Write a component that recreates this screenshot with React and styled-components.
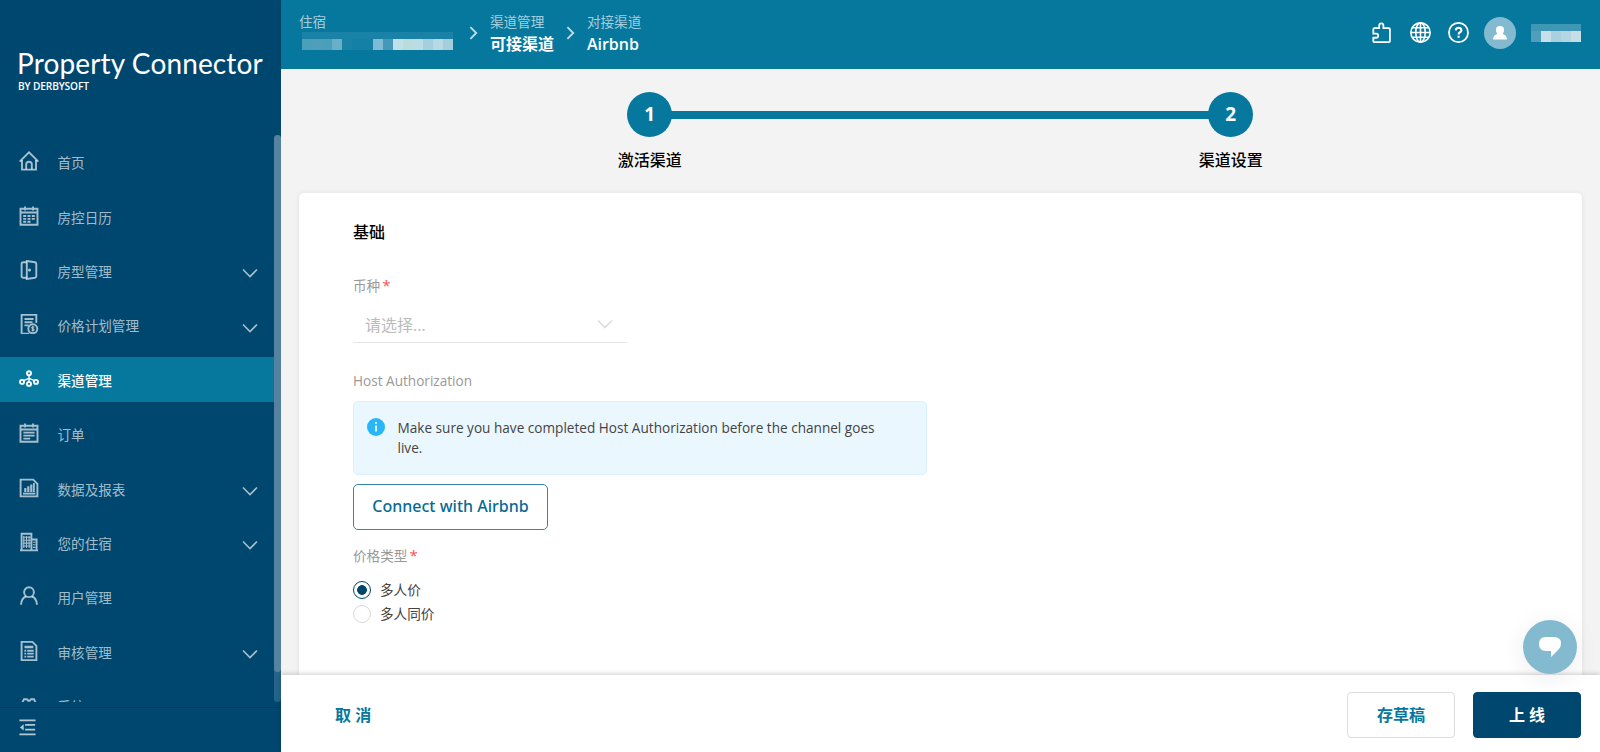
import React, { useState } from "react";
import styled, { createGlobalStyle } from "styled-components";

const menu = [
  { icon: "home", label: "首页" },
  { icon: "calendar", label: "房控日历" },
  { icon: "door", label: "房型管理", children: true },
  { icon: "ratePlan", label: "价格计划管理", children: true },
  { icon: "channel", label: "渠道管理" },
  { icon: "order", label: "订单" },
  { icon: "report", label: "数据及报表", children: true },
  { icon: "building", label: "您的住宿", children: true },
  { icon: "user", label: "用户管理" },
  { icon: "audit", label: "审核管理", children: true },
  { icon: "settings", label: "系统" },
];

const propertyMask = [
  "#4b9fbb", "#4f9fba", "#4b9fbb", "#69afc5", "#1a82a6", "#1580a5", "#1580a5",
  "#7fbbd2", "#4399b7", "#c1dfe8", "#bbdcd9", "#b9dce6", "#a4cfdf", "#b8d9e3", "#a5cedc",
];

const userMask = ["#4f9fbc", "#c6dfe8", "#a8d0de", "#b3d6e1", "#c6dfe6"];

const icons = {
  home: (
    <>
      <path d="M.6 10.7 10 1.3l9.4 9.4" />
      <path d="M3 9v9.6h14V9" />
      <path d="M7.2 18.4v-4.8a2.8 2.8 0 0 1 5.6 0v4.8" />
    </>
  ),
  calendar: (
    <>
      <path d="M1.5 2.7h17v16h-17zM1.5 6.5h17M6 .5v4M14 .5v4" />
      <path d="M4.2 10h3M8.5 10h3M12.8 10h3M4.2 12.9h3M8.5 12.9h3M12.8 12.9h3M4.2 15.8h3M8.5 15.8h3" strokeWidth="1.9" />
    </>
  ),
  door: (
    <>
      <path d="M7.8 1 16 2.3q1.3.3 1.3 1.6v12.2q0 1.3-1.3 1.6L7.8 19z" />
      <path d="M7.8 2.3H4.4q-1.8 0-1.8 1.8v11.8q0 1.8 1.8 1.8h3.4" />
      <circle cx="10.5" cy="10" r=".6" fill="currentColor" />
    </>
  ),
  ratePlan: (
    <>
      <path d="M17.3 9V.8H2.6v18.8h7.6" />
      <path d="M5.5 5h9M5.5 8.2h8M5.5 11.4h4.2" />
      <circle cx="13.8" cy="14.8" r="4.5" />
      <path d="M15.3 13.2q-3-.9-2.9.5.1.9 1.5 1.1 1.7.3 1.4 1.3-.4 1-2.9.2M13.8 12v5.6" strokeWidth="1" />
    </>
  ),
  channel: (
    <>
      <circle cx="10" cy="4.2" r="2" />
      <circle cx="3" cy="12.9" r="2" />
      <circle cx="10" cy="14.9" r="2" />
      <circle cx="17" cy="12.9" r="2" />
      <path d="M10 6.2v7M10 9.3 4.5 11.6M10 9.3l5.5 2.300" strokeWidth="1.4" />
    </>
  ),
  order: (
    <>
      <path d="M1.5 2.8h17v16h-17zM1.5 6.5h17M6 .5v4M14 .5v4" />
      <path d="M4.4 9.6h11.2M4.4 12.6h11.2M4.4 15.6h6.8" />
    </>
  ),
  report: (
    <>
      <path d="M1.6 1.6h12.6l4.2 4.2v12.6H1.6z" />
      <path d="M4 15.6h12.4" />
      <path d="M5.2 10h2.2v4H5.200zM8.200 8.200h2.200V14H8.200zM11.200 6.500h2.200V14h-2.200zM14 5h1.800v9H14z" fill="currentColor" stroke="none" />
    </>
  ),
  building: (
    <>
      <path d="M2.6 18.3V1.8h9.8v16.5M12.4 7.5h5.2v10.8M1 18.4h18" />
      <path d="M4.8 4v12M7.5 4v12M10.1 4v12M4 5.3h7.5M4 8.2h7.5M4 11.1h7.5M4 14h7.5M14 10.3h2.5M14 12.8h2.5M14 15.4h2.5" strokeWidth="1.1" />
    </>
  ),
  user: (
    <>
      <circle cx="10" cy="6.2" r="4.9" />
      <path d="M2 18.8q.4-7.1 5.4-8.3M18 18.8q-.4-7.1-5.4-8.3" />
    </>
  ),
  audit: (
    <>
      <path d="M2.6.9h10.8l4 4v14.3H2.6z" />
      <path d="M5.5 6h8.8" strokeWidth="2.5" />
      <path d="M5.4 9.7h1.8M8.2 9.7h6.5M5.4 12.6h1.8M8.2 12.6h6.5M5.4 15.6h1.8M8.2 15.6h6.5" strokeWidth="1.9" />
    </>
  ),
  settings: (
    <path d="M3.6 7.2 5 4.2h3l1.200 1.500h1.600L12 4.200h3l1.400 3V9.500L18 12l-2 5H4l-2-5 1.600-2.500z" />
  ),
  puzzle: (
    <path d="M3.2 5.800h4.600V3.300a2 2 0 0 1 4 0v2.500H17q1 0 1 1v11.400q0 1-1 1H3.200q-1 0-1-1V15h2.700a2 2 0 0 0 0-4H2.200V6.800q0-1 1-1z" />
  ),
  globe: (
    <>
      <circle cx="10" cy="10" r="9.2" />
      <ellipse cx="10" cy="10" rx="4.5" ry="9.2" />
      <path d="M10 .8v18.4M.8 10h18.4M2.3 5.4h15.4M2.3 14.6h15.4" />
    </>
  ),
  help: (
    <>
      <circle cx="10" cy="10" r="9.1" />
      <path d="M7.4 8q.2-2.5 2.7-2.5 2.6.1 2.6 2.3 0 1.2-1.3 2-1.3.7-1.3 2.1M10.1 13.2v1.8" strokeWidth="2" />
    </>
  ),
  down: <path d="m3 6.5 7 7 7-7" />,
  right: <path d="m6 3.5 6.5 6.5L6 16.5" />,
  fold: (
    <>
      <path d="M1.5 2.4h17M7.5 7.2h10.5M7.5 12.2h10.5M1.5 17.2h17" />
      <path d="M6 6.5v6.7L2 9.9z" fill="currentColor" stroke="none" />
    </>
  ),
};

function Icon({ name, size = 20, weight = 1.6 }) {
  return (
    <Svg $size={size} viewBox="0 0 20 20" strokeWidth={weight}>
      {icons[name]}
    </Svg>
  );
}

function Mask({ colors, top }) {
  return (
    <MaskBox $top={top}>
      {colors.map((color, i) => (
        <MaskCell key={i} $color={color} />
      ))}
    </MaskBox>
  );
}

export default function App() {
  const [priceType, setPriceType] = useState("multi");

  return (
    <>
      <GlobalStyle />
      <Page>
        <Sidebar>
          <Brand>
            <BrandName>Property Connector</BrandName>
            <BrandBy>BY DERBYSOFT</BrandBy>
          </Brand>
          <MenuArea>
            <Menu>
              {menu.map(({ icon, label, children }) => (
                <MenuItem key={icon} $active={icon === "channel"}>
                  <Icon name={icon} weight={1.9} />
                  <MenuLabel>{label}</MenuLabel>
                  {children && <Icon name="down" weight={1.6} />}
                </MenuItem>
              ))}
            </Menu>
            <Track>
              <Thumb />
            </Track>
          </MenuArea>
          <Fold>
            <Icon name="fold" size={19} weight={1.9} />
          </Fold>
        </Sidebar>

        <Main>
          <Header>
            <Crumb>
              <CrumbType>住宿</CrumbType>
              <Mask colors={propertyMask} top="#1a82a6" />
            </Crumb>
            <Separator $before={5.5}>
              <Icon name="right" size={18} weight={2} />
            </Separator>
            <Crumb>
              <CrumbType>渠道管理</CrumbType>
              <CrumbName>可接渠道</CrumbName>
            </Crumb>
            <Separator $before={8}>
              <Icon name="right" size={18} weight={2} />
            </Separator>
            <Crumb>
              <CrumbType>对接渠道</CrumbType>
              <CrumbName $latin>Airbnb</CrumbName>
            </Crumb>
            <Tools>
              <Icon name="puzzle" size={21} weight={1.7} />
              <Icon name="globe" size={21} weight={1.5} />
              <Icon name="help" size={21} weight={1.7} />
              <Avatar>
                <svg width="14" height="14" viewBox="0 0 14 14" fill="#fff">
                  <path d="M7 0a4.1 4.1 0 0 1 4.1 4.1q0 2-1.2 3.3.1.7 1 1.1 2.8 1 3.1 5H0q.3-4 3.1-5 .9-.4 1-1.1-1.2-1.3-1.2-3.3A4.1 4.1 0 0 1 7 0z" />
                </svg>
              </Avatar>
              <Mask colors={userMask} top="#4097b5" />
            </Tools>
          </Header>

          <Content>
            <Steps>
              <Step>
                <StepNumber>1</StepNumber>
                <StepTitle>激活渠道</StepTitle>
              </Step>
              <StepLine />
              <Step>
                <StepNumber>2</StepNumber>
                <StepTitle>渠道设置</StepTitle>
              </Step>
            </Steps>

            <Card>
              <SectionTitle>基础</SectionTitle>
              <Label $top={31}>
                币种<Required>*</Required>
              </Label>
              <Select>
                请选择...
                <Icon name="down" weight={1.7} />
              </Select>
              <Label $top={28}>Host Authorization</Label>
              <Alert>
                <svg width="18" height="18" viewBox="0 0 18 18">
                  <circle cx="9" cy="9" r="9" fill="#29b6f6" />
                  <path d="M9 4v1.8M9 7.4v6.1" stroke="#fff" strokeWidth="1.7" />
                </svg>
                <p>
                  Make sure you have completed Host Authorization before the
                  channel goes live.
                </p>
              </Alert>
              <ConnectButton>Connect with Airbnb</ConnectButton>
              <Label $top={15}>
                价格类型<Required>*</Required>
              </Label>
              <Options>
                <Option onClick={() => setPriceType("multi")}>
                  <Radio $checked={priceType === "multi"} />
                  多人价
                </Option>
                <Option onClick={() => setPriceType("same")}>
                  <Radio $checked={priceType === "same"} />
                  多人同价
                </Option>
              </Options>
            </Card>
          </Content>

          <Footer>
            <Cancel>取 消</Cancel>
            <Button>存草稿</Button>
            <Button $primary>上 线</Button>
          </Footer>
        </Main>

        <Chat>
          <svg width="22" height="20" viewBox="0 0 22 20" fill="#fff">
            <path d="M7 0h8q7 0 7 6.5 0 4-4 7.5l-6 6v-6H7q-7 0-7-7t7-7z" />
          </svg>
        </Chat>
      </Page>
    </>
  );
}

const GlobalStyle = createGlobalStyle`
  * {
    box-sizing: border-box;
  }

  body {
    margin: 0;
    overflow: hidden;
    font-family: "Open Sans", "Noto Sans CJK SC", sans-serif;
    font-size: 13.6px;
    color: #444;
  }

  p {
    margin: 0;
  }
`;

const Svg = styled.svg`
  width: ${({ $size }) => $size}px;
  height: ${({ $size }) => $size}px;
  flex: none;
  fill: none;
  stroke: currentColor;
`;

const Page = styled.div`
  display: flex;
  height: 752px;
  overflow: hidden;
`;

const Sidebar = styled.aside`
  display: flex;
  flex-direction: column;
  width: 281px;
  flex: none;
  background-color: #00476f;
`;

const Brand = styled.div`
  height: 135px;
  padding: 46px 0 0 17px;
  color: #fff;
  white-space: nowrap;
`;

const BrandName = styled.div`
  font-family: Lato, sans-serif;
  font-size: 28px;
  line-height: 34px;
  letter-spacing: 0.13px;
`;

const BrandBy = styled.div`
  padding: 1px 0 0 1px;
  font-size: 10.2px;
  font-weight: 600;
  line-height: 11px;
  letter-spacing: -0.15px;
`;

const MenuArea = styled.div`
  display: flex;
  height: 567px;
  overflow: hidden;
`;

const Menu = styled.nav`
  display: flex;
  flex-direction: column;
  gap: 9px;
  width: 274px;
  padding-top: 4px;
`;

const MenuItem = styled.div`
  display: flex;
  align-items: center;
  flex: none;
  height: 45.4px;
  padding: 3px 14px 0 19px;
  color: ${({ $active }) => ($active ? "#fff" : "rgba(255, 255, 255, 0.65)")};
  background-color: ${({ $active }) => ($active ? "#06789e" : "transparent")};
  font-weight: ${({ $active }) => ($active ? 500 : 400)};

  & svg:first-child {
    margin-top: -4px;
  }

  & svg:last-child {
    margin-top: 3px;
  }
`;

const MenuLabel = styled.span`
  flex: 1;
  margin-left: 18.5px;
  line-height: 20px;
`;

const Track = styled.div`
  width: 7px;
  border-radius: 4px;
  background-color: #26638a;
`;

const Thumb = styled.div`
  height: 537px;
  border-radius: 4px;
  background-color: #54829f;
`;

const Fold = styled.div`
  display: flex;
  align-items: center;
  height: 45px;
  margin-top: 5px;
  padding: 0 18px 5px;
  color: rgba(255, 255, 255, 0.7);
  border-top: 1px solid #003b62;
`;

const Main = styled.main`
  display: flex;
  flex-direction: column;
  flex: 1;
  min-width: 0;
`;

const Header = styled.header`
  display: flex;
  height: 69px;
  flex: none;
  padding: 11px 13px 0 18px;
  color: #fff;
  background-color: #06789e;
  box-shadow: 0 1px 4px rgba(0, 0, 0, 0.12);
`;

const Crumb = styled.div`
  display: flex;
  flex-direction: column;
`;

const CrumbType = styled.span`
  color: rgba(255, 255, 255, 0.65);
  line-height: 21px;
`;

const CrumbName = styled.span`
  font-size: 16px;
  font-weight: ${({ $latin }) => ($latin ? 600 : 700)};
  line-height: 24px;
`;

const Separator = styled.span`
  display: flex;
  padding-top: 13px;
  margin: 0 7px 0 ${({ $before }) => $before}px;
  color: rgba(255, 255, 255, 0.75);
`;

const Tools = styled.div`
  display: flex;
  align-items: center;
  height: 43px;
  margin-left: auto;

  & > svg {
    margin-right: 16.5px;
  }

  & > svg:first-child {
    margin-right: 18px;
  }
`;

const Avatar = styled.div`
  display: flex;
  align-items: center;
  justify-content: center;
  width: 32px;
  height: 32px;
  margin: 0 12px 0 -1.5px;
  border-radius: 50%;
  background-color: #84bacf;
`;

const MaskBox = styled.div`
  display: flex;
  width: fit-content;
  margin: 0 6px 0 3px;
  border-top: 7px solid ${({ $top }) => $top};
`;

const MaskCell = styled.span`
  width: 10.1px;
  height: 11px;
  background-color: ${({ $color }) => $color};
`;

const Content = styled.div`
  display: flex;
  flex-direction: column;
  flex: 1;
  min-height: 0;
  padding: 22.5px 18.5px 0 18px;
  background-color: #f3f3f3;
`;

const Steps = styled.div`
  display: flex;
  justify-content: center;
  height: 101px;
  flex: none;
`;

const Step = styled.div`
  display: flex;
  flex-direction: column;
  align-items: center;
  width: 45px;
`;

const StepNumber = styled.span`
  width: 45px;
  height: 45px;
  border-radius: 50%;
  background-color: #06789e;
  color: #fff;
  font-size: 19px;
  font-weight: 700;
  line-height: 45px;
  text-align: center;
`;

const StepTitle = styled.span`
  margin-top: 11px;
  color: #000;
  font-size: 16px;
  font-weight: 500;
  line-height: 24px;
  white-space: nowrap;
`;

const StepLine = styled.div`
  width: 538px;
  height: 8px;
  margin: 19px -1px 0;
  background-color: #06789e;
`;

const Card = styled.section`
  flex: 1;
  min-height: 0;
  padding: 27.5px 54px 0;
  border-radius: 5px 5px 0 0;
  background-color: #fff;
  box-shadow: 0 0 5px rgba(0, 0, 0, 0.08);
`;

const SectionTitle = styled.h2`
  margin: 0;
  color: #000;
  font-size: 16px;
  font-weight: 500;
  line-height: 24px;
`;

const Label = styled.div`
  margin-top: ${({ $top }) => $top}px;
  color: #999;
  line-height: 20px;
`;

const Required = styled.span`
  margin-left: 2px;
  color: #ff4d4f;
  font-size: 15px;
`;

const Select = styled.div`
  display: flex;
  align-items: center;
  justify-content: space-between;
  width: 274px;
  height: 37px;
  margin-top: 10px;
  padding: 0 12px;
  border-bottom: 1px solid #e5e5e5;
  color: #bbb;
  font-size: 16px;

  & svg {
    color: #ddd;
  }
`;

const Alert = styled.div`
  display: flex;
  gap: 12.5px;
  width: 574px;
  height: 74px;
  margin-top: 10px;
  padding: 16px 45px 0 13px;
  border: 1px solid #d9f1fe;
  border-radius: 5px;
  background-color: #ebf7fe;
  line-height: 20.4px;

  & svg {
    flex: none;
  }
`;

const ConnectButton = styled.button`
  display: block;
  width: 195px;
  height: 46px;
  margin-top: 9px;
  padding: 0 0 2px;
  border: 1px solid #3984a5;
  border-radius: 5px;
  background-color: #fff;
  color: #066b93;
  font-family: "Noto Sans", sans-serif;
  font-size: 16px;
  font-weight: 500;
  white-space: nowrap;
`;

const Options = styled.div`
  display: flex;
  flex-direction: column;
  gap: 4px;
  margin-top: 14px;
`;

const Option = styled.label`
  display: flex;
  align-items: center;
  gap: 9px;
  line-height: 20px;
`;

const Radio = styled.span`
  width: 18px;
  height: 18px;
  border: 1px solid ${({ $checked }) => ($checked ? "#00476f" : "#d9d9d9")};
  border-radius: 50%;
  background: ${({ $checked }) =>
    $checked ? "radial-gradient(circle, #00476f 4.5px, #fff 5.2px)" : "#fff"};
`;

const Footer = styled.footer`
  display: flex;
  align-items: center;
  gap: 18px;
  height: 77px;
  flex: none;
  padding: 3px 19px 0 54px;
  background-color: #fff;
  box-shadow: 0 -1px 5px rgba(0, 0, 0, 0.2);
  z-index: 1;
`;

const Cancel = styled.span`
  margin: 0 auto 2px 0;
  color: #06789e;
  font-size: 16px;
  font-weight: 700;
`;

const Button = styled.button`
  width: 108px;
  height: 46px;
  padding: 0 0 2px;
  border: 1px solid ${({ $primary }) => ($primary ? "#00476f" : "#ddd")};
  border-radius: 4px;
  background-color: ${({ $primary }) => ($primary ? "#00476f" : "#fff")};
  color: ${({ $primary }) => ($primary ? "#fff" : "#06789e")};
  font-family: inherit;
  font-size: 16px;
  font-weight: 700;
`;

const Chat = styled.div`
  position: fixed;
  right: 23px;
  bottom: 78px;
  z-index: 2;
  display: flex;
  align-items: center;
  justify-content: center;
  width: 54px;
  height: 54px;
  border-radius: 50%;
  background-color: #84bacf;
  box-shadow: 0 4px 24px rgba(0, 0, 0, 0.08);
`;
